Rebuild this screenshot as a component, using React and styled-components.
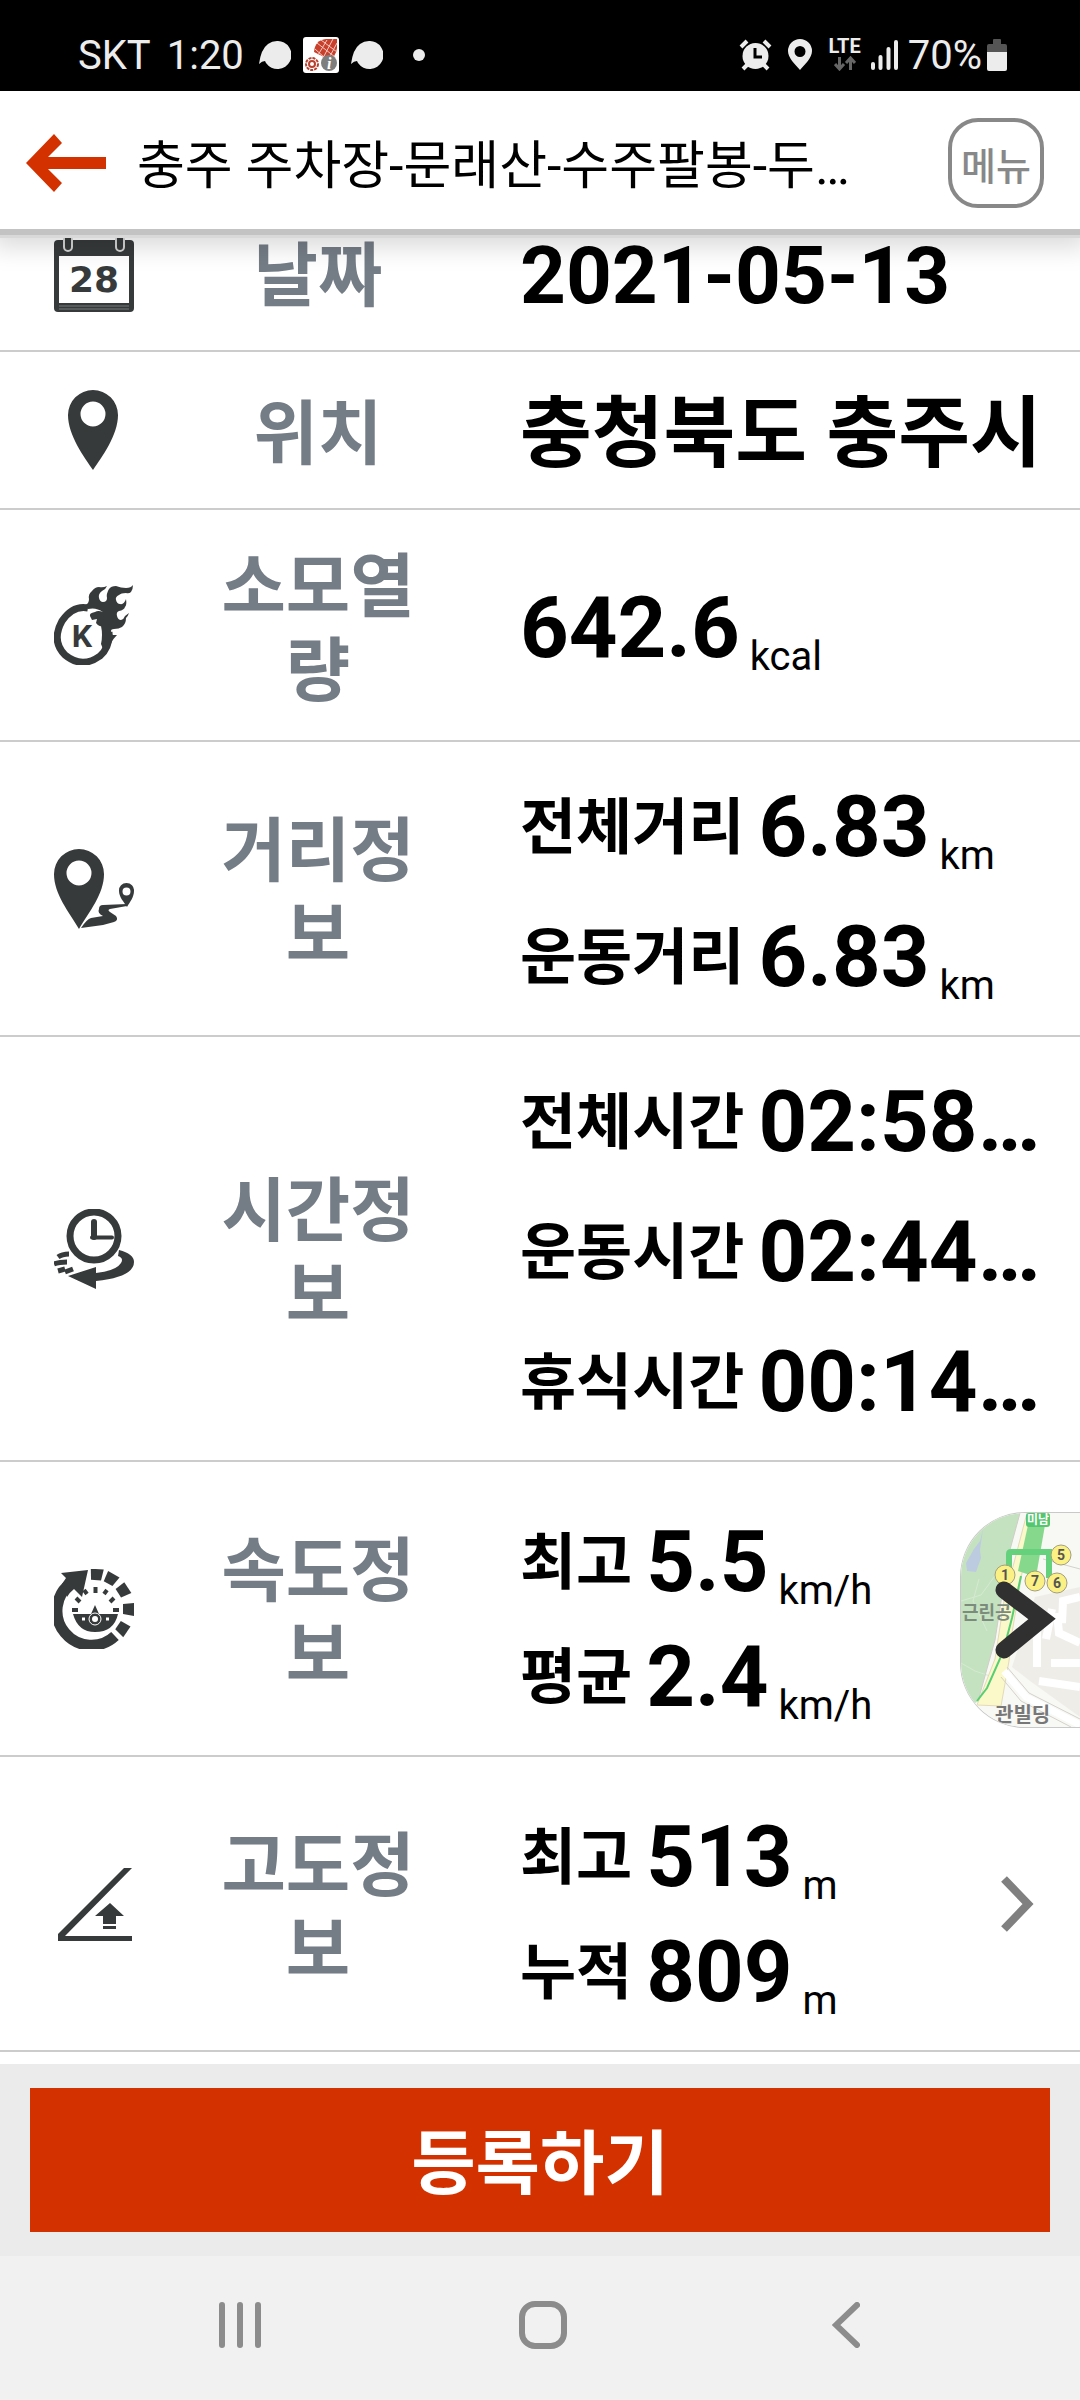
import React from 'react'
import styled, { createGlobalStyle, css } from 'styled-components'

const App = () => {
    return (
        <Page>
            <GlobalStyle />
            <StatusBar />
            <Header />
            <Records />
            <BottomBar>
                <RegisterButton type="button">등록하기</RegisterButton>
            </BottomBar>
            <NavigationBar />
        </Page>
    )
}

export default App

const StatusBar = () => (
    <Status>
        <StatusGroup $gap={15}>
            <StatusGroup $gap={16}>
                <StatusText>SKT</StatusText>
                <StatusText>1:20</StatusText>
            </StatusGroup>
            <StatusGroup $gap={12}>
                <BubbleIcon />
                <TrackerIcon />
                <BubbleIcon />
                <Dot />
            </StatusGroup>
        </StatusGroup>
        <StatusGroup $gap={10}>
            <StatusGroup $gap={16}>
                <AlarmIcon />
                <SmallPinIcon />
                <Network>
                    LTE
                    <svg width="22" height="15" viewBox="0 0 22 15" fill="none" stroke="#666" strokeWidth="3">
                        <path d="M5.5 1v11M1 8l4.500 5 4.500-5M16.500 14V3M12 7l4.500-5 4.500 5" />
                    </svg>
                </Network>
            </StatusGroup>
            <svg width="27" height="30" viewBox="0 0 27 30" fill="none" stroke="#ececec" strokeWidth="4" strokeLinecap="round">
                <path d="M2 24v4M9.500 17v11M17.500 9v19M25 2v26" />
            </svg>
            <StatusGroup $gap={5}>
                <StatusText>70%</StatusText>
                <svg width="20" height="32" viewBox="0 0 20 32">
                    <path d="M0 7q0-2 2-2h4V1q0-1 1-1h6q1 0 1 1v4h4q2 0 2 2v6H0z" fill="#555" />
                    <path d="M0 13h20v17q0 2-2 2H2q-2 0-2-2z" fill="#ececec" />
                </svg>
            </StatusGroup>
        </StatusGroup>
    </Status>
)

const Header = () => (
    <TopBar>
        <BackButton type="button" aria-label="뒤로">
            <svg width="80" height="58" viewBox="0 0 80 58" fill="#d33200">
                <path d="M0 29 28 0l8 9-14 14h58v12H22l14 14-8 9z" />
            </svg>
        </BackButton>
        <Title>충주 주차장-문래산-수주팔봉-두…</Title>
        <MenuButton type="button">메뉴</MenuButton>
    </TopBar>
)

const Records = () => (
    <Main>
        <Table>
            <colgroup>
                <IconCol />
                <LabelCol />
                <col />
            </colgroup>
            <tbody>
                <Row>
                    <IconCell><CalendarIcon /></IconCell>
                    <Label scope="row">날짜</Label>
                    <Value><Line><DateText>2021-05-13</DateText></Line></Value>
                </Row>
                <Row>
                    <IconCell><PinIcon /></IconCell>
                    <Label scope="row">위치</Label>
                    <Value><Line><Place>충청북도 충주시</Place></Line></Value>
                </Row>
                <Row>
                    <IconCell><CalorieIcon /></IconCell>
                    <Label scope="row">소모열량</Label>
                    <Value><Line><Num>642.6</Num><Unit>kcal</Unit></Line></Value>
                </Row>
                <Row>
                    <IconCell><RouteIcon /></IconCell>
                    <Label scope="row">거리정보</Label>
                    <Value $lines="loose">
                        <Line><Kind>전체거리</Kind><Num>6.83</Num><Unit>km</Unit></Line>
                        <Line><Kind>운동거리</Kind><Num>6.83</Num><Unit>km</Unit></Line>
                    </Value>
                </Row>
                <Row>
                    <IconCell><TimeIcon /></IconCell>
                    <Label scope="row">시간정보</Label>
                    <Value $lines="loose">
                        <Line><Kind>전체시간</Kind><Num>02:58…</Num></Line>
                        <Line><Kind>운동시간</Kind><Num>02:44…</Num></Line>
                        <Line><Kind>휴식시간</Kind><Num>00:14…</Num></Line>
                    </Value>
                </Row>
                <Row>
                    <IconCell><SpeedIcon /></IconCell>
                    <Label scope="row">속도정보</Label>
                    <Value $lines="tight">
                        <Line><Kind>최고</Kind><Num>5.5</Num><Unit>km/h</Unit></Line>
                        <Line><Kind>평균</Kind><Num>2.4</Num><Unit>km/h</Unit></Line>
                        <MapButton type="button" aria-label="지도 열기">
                            <MapPreview />
                        </MapButton>
                    </Value>
                </Row>
                <Row>
                    <IconCell><AltitudeIcon /></IconCell>
                    <Label scope="row">고도정보</Label>
                    <Value $lines="tight">
                        <Line><Kind>최고</Kind><Num>513</Num><Unit>m</Unit></Line>
                        <Line><Kind>누적</Kind><Num>809</Num><Unit>m</Unit></Line>
                        <MoreButton type="button" aria-label="고도 상세">
                            <svg width="34" height="58" viewBox="0 0 34 58" fill="none" stroke="#808080" strokeWidth="8">
                                <path d="M4 4l24 25L4 54" />
                            </svg>
                        </MoreButton>
                    </Value>
                </Row>
            </tbody>
        </Table>
    </Main>
)

const NavigationBar = () => (
    <SystemNav>
        <NavButton type="button" aria-label="최근 앱">
            <svg width="44" height="46" viewBox="0 0 44 46" fill="none" stroke="#8c8c8c" strokeWidth="6" strokeLinecap="round">
                <path d="M4 3v40M22 3v40M40 3v40" />
            </svg>
        </NavButton>
        <NavButton type="button" aria-label="홈">
            <svg width="48" height="48" viewBox="0 0 48 48" fill="none" stroke="#8c8c8c" strokeWidth="6">
                <rect x="3" y="3" width="42" height="42" rx="13" />
            </svg>
        </NavButton>
        <NavButton type="button" aria-label="이전">
            <svg width="28" height="46" viewBox="0 0 28 46" fill="none" stroke="#8c8c8c" strokeWidth="6" strokeLinecap="round">
                <path d="M25 3 4 23l21 20" />
            </svg>
        </NavButton>
    </SystemNav>
)

/* status bar icons */

const BubbleIcon = () => (
    <svg width="32" height="28" viewBox="0 0 32 28" fill="#ececec">
        <path d="M18 0a14 14 0 1 1-11 22l-1-2q-3 0-6 3Q2 8 9 3q4-3 9-3z" />
    </svg>
)

const TrackerIcon = () => (
    <svg width="36" height="36" viewBox="0 0 36 36">
        <rect width="36" height="36" rx="3" fill="#fff" />
        <path d="M11 15Q12 3 23 2h11v9q-1 10-9 11z" fill="#c8402c" />
        <path d="M14 6l18 14M18 3l16 12M12 12l10 9M24 3l-9 15M30 2l-10 19M34 6l-8 15" stroke="#f3c9c1" strokeWidth="1" fill="none" />
        <circle cx="9" cy="27" r="6" fill="none" stroke="#b8402f" strokeWidth="2" strokeDasharray="3 1" />
        <circle cx="9" cy="27" r="3" fill="none" stroke="#b8402f" strokeWidth="2" />
        <circle cx="26" cy="26" r="8" fill="#7e7e7e" />
        <InfoText x="24" y="32">i</InfoText>
    </svg>
)

const AlarmIcon = () => (
    <svg width="33" height="32" viewBox="0 0 33 32">
        <circle cx="16.500" cy="17" r="13" fill="#ececec" />
        <path d="M2 8l6-6M31 8l-6-6M4 30l5-5M29 30l-5-5" stroke="#ececec" strokeWidth="4" />
        <path d="M16 9v9h7" stroke="#000" strokeWidth="3" fill="none" />
    </svg>
)

const SmallPinIcon = () => (
    <svg width="24" height="31" viewBox="0 0 24 31" fill="#ececec" fillRule="evenodd">
        <path d="M12 0a12 12 0 0 1 12 12c0 7-7 13-12 19C7 25 0 19 0 12A12 12 0 0 1 12 0zm0 7a5.500 5.500 0 1 0 0 11 5.500 5.500 0 0 0 0-11z" />
    </svg>
)

/* record icons */

const CalendarIcon = () => (
    <Icon viewBox="0 0 80 80">
        <path d="M0 12q0-4 4-4h72q4 0 4 4v64q0 4-4 4H4q-4 0-4-4z" />
        <path d="M5 24h70v47H5z" fill="#fff" />
        <path d="M5 74h70M5 77h70" stroke="#777b7b" strokeWidth="1" />
        <path d="M14 8v7M66 8v7" stroke="#d4d4d4" strokeWidth="10" strokeLinecap="round" />
        <path d="M14 0v15M66 0v15" stroke="#373a3b" strokeWidth="6" strokeLinecap="round" />
        <DayText x="40" y="60" textAnchor="middle">28</DayText>
    </Icon>
)

const PinIcon = () => (
    <Icon viewBox="0 0 80 80" fillRule="evenodd">
        <path d="M39 0a25 25 0 0 1 25 25c0 20-16 42-25 55C30 67 14 45 14 25A25 25 0 0 1 39 0zm0 11.500a12.500 12.500 0 1 0 0 25 12.500 12.500 0 0 0 0-25z" />
    </Icon>
)

const CalorieIcon = () => (
    <Icon viewBox="0 0 80 80">
        <path d="M34 23Q19 20 8 36-3 56 11 70q17 14 35 1 10-9 9-24" fill="none" stroke="#373a3b" strokeWidth="7" />
        <path d="M31 20Q35 19 35 14 34 9 38 6q3-4 7-4 4 1 8-1-1 3-5 5-4 3-3 7 1 4 4 4 4 0 4-4-1-4 2-9 2-3 7-3 5 2 10 2t7-3q0 4-2 7-2 2-5 1-5 0-7 2-4 2-3 5 1 4 4 4 4 1 6-5 1 6-1 8-1 3-6 4-3 1-2 5 1 4 4 4 3-1 4-4l4-3q-1 3-3 5 0 6-4 9-3 2-8 2-3 0-3 2 0 3 2 4h4q-4 4-6 8-2 7-6 11l-4-10q2-9 0-18-2 1-5-3l1-4-5 1-2-4q-1-3 5-4 3-2 8 0-7-5-15-3z" />
        <LetterText x="28" y="62" textAnchor="middle">K</LetterText>
    </Icon>
)

const RouteIcon = () => (
    <Icon viewBox="0 0 80 80" fillRule="evenodd">
        <path d="M25 0a25 25 0 0 1 25 25c0 20-15 38-25 55C15 63 0 45 0 25A25 25 0 0 1 25 0zm0 11.500a12.500 12.500 0 1 0 0 25 12.500 12.500 0 0 0 0-25z" />
        <path d="M27 79q6-9 10-10l12-2q-6-3-4-7 0-4 4-4l24-1v2l-17 3q-3 1 0 3l6 4q3 4-2 6l-11 3z" />
        <path d="M72.500 34a7.500 7.500 0 0 1 7.500 8c0 6-4 11-7 16-3-5-8-10-8-16a7.500 7.500 0 0 1 7.500-8zm0 4.500a4 4 0 1 0 0 8 4 4 0 0 0 0-8z" />
    </Icon>
)

const TimeIcon = () => (
    <Icon viewBox="0 0 80 80">
        <circle cx="40" cy="27" r="24" fill="none" stroke="#373a3b" strokeWidth="7" />
        <path d="M40 13v15" stroke="#373a3b" strokeWidth="6" strokeLinecap="round" />
        <path d="M38 28.500h20" stroke="#373a3b" strokeWidth="4" strokeLinecap="round" />
        <path d="M65 41q15 4 15 12 0 15-38 19v8L14 67l28-9v6q20-2 25-10 3-5-3-7z" />
        <path d="M4 48q4-3 11-3M0 55q5-2 13-2M4 62l7-2M11 63l8-3" fill="none" stroke="#373a3b" strokeWidth="5" />
    </Icon>
)

const SpeedIcon = () => (
    <Icon viewBox="0 0 80 80">
        <path d="M17 14A34.500 34.500 0 1 0 61 67" fill="none" stroke="#373a3b" strokeWidth="11" />
        <path d="M7 4l27-3-6 27-8-8q-5 4-7 8L8 15l4-6z" />
        {[-86, -61, -33, 0, 34].map(angle => (
            <path key={angle} d="M69 35l11-1v13l-11-2z" transform={`rotate(${angle} 40 40)`} />
        ))}
        <path d="M19 45h18l4-9 4 9h19Q60 63 41 63 24 63 19 45z" />
        <path d="M18 41h6M59 41h6M22 29l4 4M60 29l-4 4M30 21l3 4M53 21l-3 4M41.500 18v6" stroke="#373a3b" strokeWidth="4" />
        <circle cx="41" cy="50" r="6" fill="none" stroke="#fff" strokeWidth="1" />
        <circle cx="41" cy="50" r="3" fill="#fff" />
        <path d="M28 50h3M52 50h3" stroke="#fff" strokeWidth="3" />
    </Icon>
)

const AltitudeIcon = () => (
    <Icon viewBox="0 0 80 80">
        <path d="M4 77v-7L70 4h8L11 72h67v5z" />
        <path d="M56 39l14 13h-8v8H49v-8h-8zM49 62h13v3H49z" />
    </Icon>
)

const MapPreview = () => (
    <svg width="119" height="214" viewBox="0 0 119 214">
        <rect width="119" height="214" fill="#f8f8f5" />
        <path d="M0 0h59L47 44 34 127 17 188 0 200z" fill="#c5e2c0" />
        <path d="M22 16l-3 12-6 8-8 14 1 8 9 1 5-14-1-8z" fill="#bccbe0" />
        <path d="M0 88l20-6 16-22M0 150l14 8 18 6M18 66l-6 22 14 30" fill="none" stroke="#d3ead0" strokeWidth="1" />
        <path d="M59 0L47 44 34 127 17 188" fill="none" stroke="#cfcdc6" strokeWidth="1" />
        <path d="M66 0h5L60 66l-9 54-3 28-8 45-24-1 18-46 9-58z" fill="#fbf8c9" stroke="#e2dab8" strokeWidth="1" />
        <path d="M74 84l45-10v130l-50-36-18-14z" fill="#efede8" />
        <path d="M96 100l2 20 21 10M76 108v46M91 96l-6 30M90 150h29M78 168l41 6M119 84l-17 4-1 22" fill="none" stroke="#fff" strokeWidth="8" />
        <path d="M43 158l22 26 54 28" fill="none" stroke="#fff" strokeWidth="7" />
        <path d="M46 154l22 26 51 26M40 164l20 24 50 26M82 46l37 10" fill="none" stroke="#d5d1cb" strokeWidth="1" />
        <path d="M60 63l-9 42-9 34-16 36-10 13" fill="none" stroke="#55cf72" strokeWidth="2" />
        <path d="M67 12h17L75 64 57 58z" fill="#86d98c" />
        <path d="M48 56V41q0-2 2-2h38v26" fill="none" stroke="#66d17c" strokeWidth="6" />
        <rect x="65" y="0" width="24" height="14" rx="3" fill="#54c66f" />
        <MapText x="77" y="11" textAnchor="middle" $size={12} $color="#fff">미남</MapText>
        <MapText x="1" y="106" $size={18} $color="#7c8c7c">근린공</MapText>
        <MapText x="34" y="209" $size={20} $color="#777">관빌딩</MapText>
        {[[1, 44, 62], [5, 100, 42], [7, 74, 68], [6, 96, 70]].map(([no, x, y]) => (
            <g key={no}>
                <circle cx={x} cy={y} r="10" fill="#fbf083" stroke="#a3a07c" strokeWidth="1" />
                <MapText x={x} y={y + 5} textAnchor="middle" $size={14} $color="#555">{no}</MapText>
            </g>
        ))}
        <path d="M43 77l38 29-38 31" fill="none" stroke="#303030" strokeWidth="17" strokeLinecap="round" />
    </svg>
)

const GlobalStyle = createGlobalStyle`
    * {
        box-sizing: border-box;
    }
    body {
        margin: 0;
        background: #fff;
        color: #000;
        font-family: Roboto, 'Noto Sans CJK KR', sans-serif;
    }
    button {
        padding: 0;
        border: 0;
        background: none;
        font-family: inherit;
        cursor: pointer;
    }
    svg {
        display: block;
        flex-shrink: 0;
    }
`;

const Page = styled.div`
    display: flex;
    flex-direction: column;
    min-height: 100vh;
`;

const Status = styled.div`
    display: flex;
    justify-content: space-between;
    align-items: center;
    height: 91px;
    padding: 18px 73px 0 78px;
    background: #000;
    position: relative;
    z-index: 2;
`;

const StatusGroup = styled.div`
    display: flex;
    align-items: center;
    gap: ${({ $gap }) => $gap}px;
`;

const StatusText = styled.span`
    padding-top: 2px;
    font-size: 40px;
    line-height: 48px;
    color: #ececec;
`;

const Dot = styled.span`
    width: 12px;
    height: 12px;
    margin-left: 18px;
    border-radius: 50%;
    background: #ececec;
`;

const Network = styled.div`
    display: flex;
    flex-direction: column;
    align-items: center;
    gap: 2px;
    font-size: 20px;
    line-height: 16px;
    font-weight: bold;
    color: #ececec;
`;

const InfoText = styled.text`
    font: italic bold 16px 'Liberation Serif', serif;
    fill: #fff;
`;

const TopBar = styled.header`
    display: flex;
    align-items: center;
    height: 144px;
    padding: 6px 36px 0 26px;
    background: #fff;
    border-bottom: 6px solid #c3c3c3;
    box-shadow: 0 3px 0 #d9d9d9, 0 4px 24px 8px rgba(0, 0, 0, 0.15);
    position: relative;
    z-index: 1;
`;

const BackButton = styled.button`
    width: 80px;
`;

const Title = styled.h1`
    flex: 1;
    margin: 0 24px 0 31px;
    padding-top: 8px;
    font-size: 52px;
    line-height: 64px;
    font-weight: normal;
    white-space: nowrap;
`;

const MenuButton = styled.button`
    width: 96px;
    height: 90px;
    border: 4px solid #888;
    border-radius: 30px;
    font-size: 38px;
    font-weight: 500;
    color: #888;
`;

const Main = styled.main`
    flex: 1;
    margin-top: -41px;
`;

const Table = styled.table`
    width: 100%;
    table-layout: fixed;
    border-collapse: separate;
    border-spacing: 0;
`;

const IconCol = styled.col`
    width: 188px;
`;

const LabelCol = styled.col`
    width: 260px;
`;

const Row = styled.tr`
    > * {
        border-bottom: 2px solid #ccc;
    }
`;

const IconCell = styled.td`
    padding: 0 0 0 54px;
    vertical-align: middle;
`;

const Icon = styled.svg`
    width: 80px;
    height: 80px;
    fill: #373a3b;
`;

const DayText = styled.text`
    font: bold 36px 'DejaVu Sans', sans-serif;
`;

const LetterText = styled.text`
    font: bold 32px Roboto, sans-serif;
`;

const Label = styled.th`
    padding: 36px 20px 26px;
    font-size: 70px;
    line-height: 84px;
    font-weight: bold;
    color: #747c86;
    word-break: break-all;
    vertical-align: middle;
`;

const Value = styled.td`
    position: relative;
    padding: 39px 40px 19px 72px;
    vertical-align: middle;
    white-space: nowrap;

    ${({ $lines }) => $lines && css`
        padding-top: ${$lines === 'loose' ? 43 : 58}px;
        padding-bottom: 22px;
        ${Line} + ${Line} {
            margin-top: ${$lines === 'loose' ? 32 : 17}px;
        }
    `}
`;

const Line = styled.div`
    height: 98px;
    font-size: 61px;
    line-height: 98px;
`;

const Kind = styled.span`
    margin-right: 14px;
    font-weight: bold;
    line-height: 1;
    vertical-align: 7px;
`;

const Num = styled.strong`
    font-size: 85px;
    line-height: 1;
    font-weight: bold;
`;

const DateText = styled(Num)`
    font-size: 80px;
`;

const Place = styled(Num)`
    font-size: 78px;
`;

const Unit = styled.sub`
    margin-left: 10px;
    font-size: 40px;
    line-height: 1;
    font-weight: normal;
    vertical-align: sub;
`;

const MapButton = styled.button`
    position: absolute;
    top: 51px;
    right: 0;
    width: 119px;
    height: 214px;
    overflow: hidden;
    border-radius: 64px 0 0 64px;
    box-shadow: 0 0 0 1px #c9c9c9;
`;

const MapText = styled.text`
    font-family: Roboto, 'Noto Sans CJK KR', sans-serif;
    font-size: ${({ $size }) => $size}px;
    font-weight: bold;
    fill: ${({ $color }) => $color};
`;

const MoreButton = styled.button`
    position: absolute;
    top: 0;
    bottom: 0;
    right: 46px;
`;

const BottomBar = styled.div`
    display: flex;
    margin-top: 11px;
    padding: 24px 30px;
    background: #ebebeb;
`;

const RegisterButton = styled.button`
    flex: 1;
    height: 144px;
    padding-top: 10px;
    background: #d33200;
    color: #fff;
    font-size: 70px;
    line-height: 84px;
    font-weight: bold;
`;

const SystemNav = styled.nav`
    display: flex;
    height: 144px;
    padding: 0 83px 6px 89px;
    background: #f1f1f1;
`;

const NavButton = styled.button`
    flex: 1;
    display: flex;
    justify-content: center;
    align-items: center;
`;
